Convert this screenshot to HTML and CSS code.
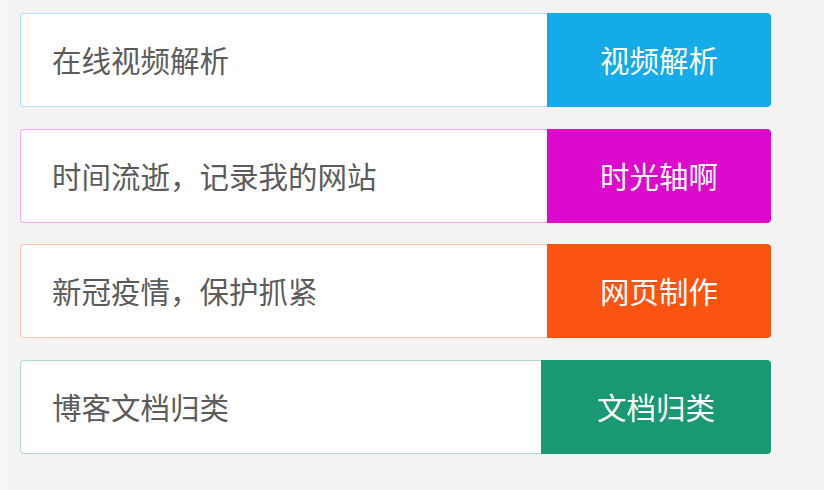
FILE: index.html
```html
<!DOCTYPE html>
<html lang="zh-CN">
<head>
    <meta charset="UTF-8">
    <meta name="viewport" content="width=device-width, initial-scale=1.0">
    <title>导航</title>
    <link rel="stylesheet" href="styles.css">
</head>
<body>
    <div class="page">
        <!-- 链接列表 -->
        <div class="link-row blue">
            <div class="link-text">在线视频解析</div>
            <a class="link-btn" href="#">视频解析</a>
        </div>
        <div class="link-row pink">
            <div class="link-text">时间流逝，记录我的网站</div>
            <a class="link-btn" href="#">时光轴啊</a>
        </div>
        <div class="link-row orange">
            <div class="link-text">新冠疫情，保护抓紧</div>
            <a class="link-btn" href="#">网页制作</a>
        </div>
        <div class="link-row green">
            <div class="link-text">博客文档归类</div>
            <a class="link-btn wide" href="#">文档归类</a>
        </div>
    </div>
</body>
</html>
```

FILE: styles.css
```css
/* 重置 */
* {
    margin: 0;
    padding: 0;
    box-sizing: border-box;
}

html {
    background-color: #f7f7f8;
}

body {
    font-family: "Microsoft YaHei", "Noto Sans CJK SC", sans-serif;
    min-height: 490px;
}

/* 主体区域 */
.page {
    margin-left: 8px;
    min-height: 490px;
    background-color: #f3f3f4;
    padding: 13px 53px 0 12px;
    display: flex;
    flex-direction: column;
    gap: 21.7px;
}

/* 每一行 */
.link-row {
    display: flex;
    height: 94px;
}

.link-text {
    flex: 1;
    display: flex;
    align-items: center;
    padding-left: 31px;
    padding-bottom: 2px;
    background-color: #ffffff;
    border: 1px solid #ccc;
    border-right: none;
    border-radius: 4px 0 0 4px;
    font-size: 29.5px;
    color: #5c5c5c;
}

.link-btn {
    width: 224px;
    display: flex;
    align-items: center;
    justify-content: center;
    padding-bottom: 2px;
    border-radius: 0 4px 4px 0;
    font-size: 29.5px;
    color: #ffffff;
    text-decoration: none;
}

.link-btn.wide {
    width: 230px;
}

/* 颜色 */
.blue .link-text { border-color: #b0e2f7; }
.blue .link-btn { background-color: #14abe8; }

.pink .link-text { border-color: #f3aaee; }
.pink .link-btn { background-color: #db0acd; }

.orange .link-text { border-color: #fdc6b0; }
.orange .link-btn { background-color: #fa5312; }

.green .link-text { border-color: #b0dccd; }
.green .link-btn { background-color: #1a9873; }
```
